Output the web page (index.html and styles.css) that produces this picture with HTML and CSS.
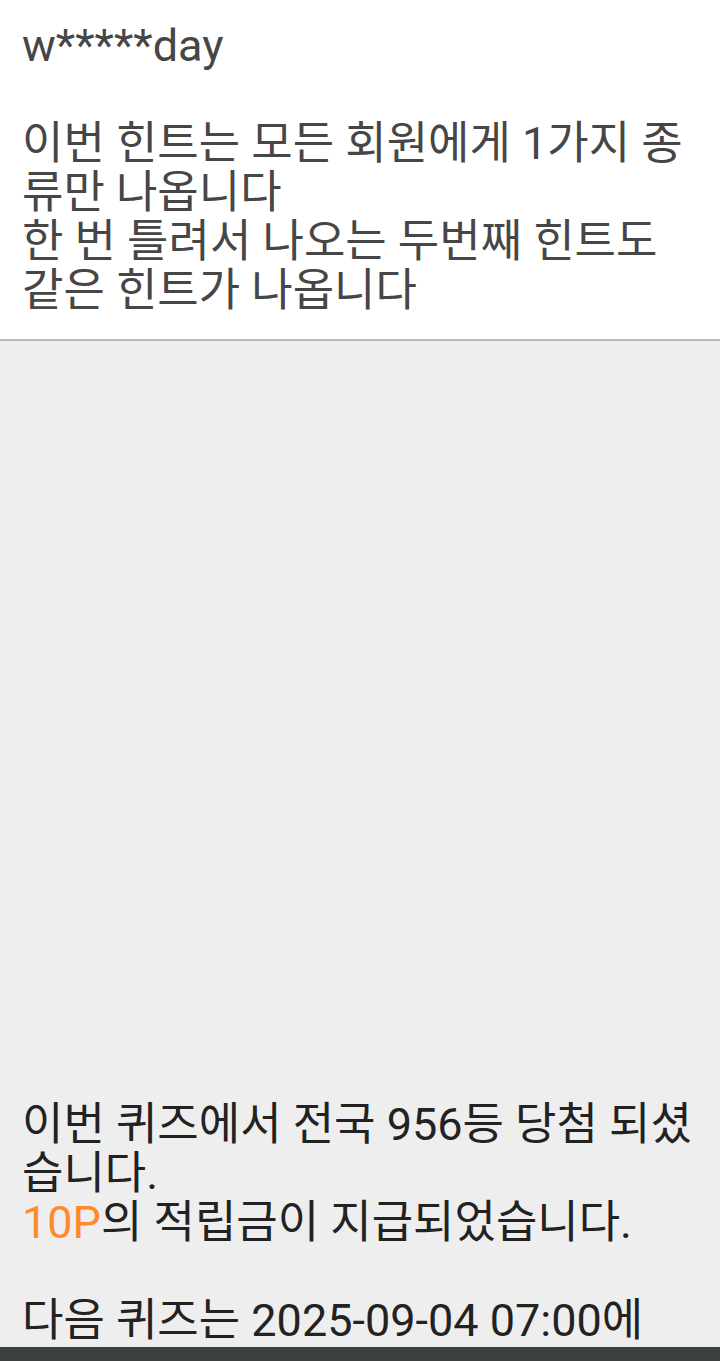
FILE: index.html
```html
<!DOCTYPE html>
<html lang="ko">
<head>
  <meta charset="UTF-8" />
  <meta name="viewport" content="width=device-width, initial-scale=1.0"/>
  <title>퀴즈 힌트</title>
  <link rel="stylesheet" href="styles.css">
</head>
<body>
  <header class="hint">
    <p class="hint-id">w*****day</p>
    <p class="hint-text">이번 힌트는 모든 회원에게 1가지 종류만 나옵니다<br>한 번 틀려서 나오는 두번째 힌트도<br>같은 힌트가 나옵니다</p>
  </header>

  <main class="board">
    <div class="ad-slot"></div>

    <section class="result">
      <p>이번 퀴즈에서 전국 956등 당첨 되셨습니다.<br><span class="point">10P</span>의 적립금이 지급되었습니다.</p>
      <p class="next">다음 퀴즈는 2025-09-04 07:00에<br>출제됩니다.</p>
    </section>
  </main>

  <div class="nav-bar"></div>
</body>
</html>
```

FILE: styles.css
```css
* {
  margin: 0;
  padding: 0;
  box-sizing: border-box;
}

body {
  font-family: Roboto, "Noto Sans CJK KR", sans-serif;
  font-size: 45px;
  line-height: 49px;
  background: #eeeeee;
  color: #222222;
}

.hint {
  background: #ffffff;
  color: #464646;
  padding: 21px 22px 24px;
  border-bottom: 2px solid #b8b8b8;
}

.hint-id {
  margin-bottom: 49px;
}

.board {
  display: flex;
  flex-direction: column;
}

.ad-slot {
  height: 759px;
}

.result {
  padding: 0 22px 60px;
}

.result .next {
  margin-top: 49px;
}

.point {
  color: #ff8a2b;
}

.nav-bar {
  position: fixed;
  left: 0;
  right: 0;
  bottom: 0;
  height: 14px;
  background: #3b4141;
}
```
